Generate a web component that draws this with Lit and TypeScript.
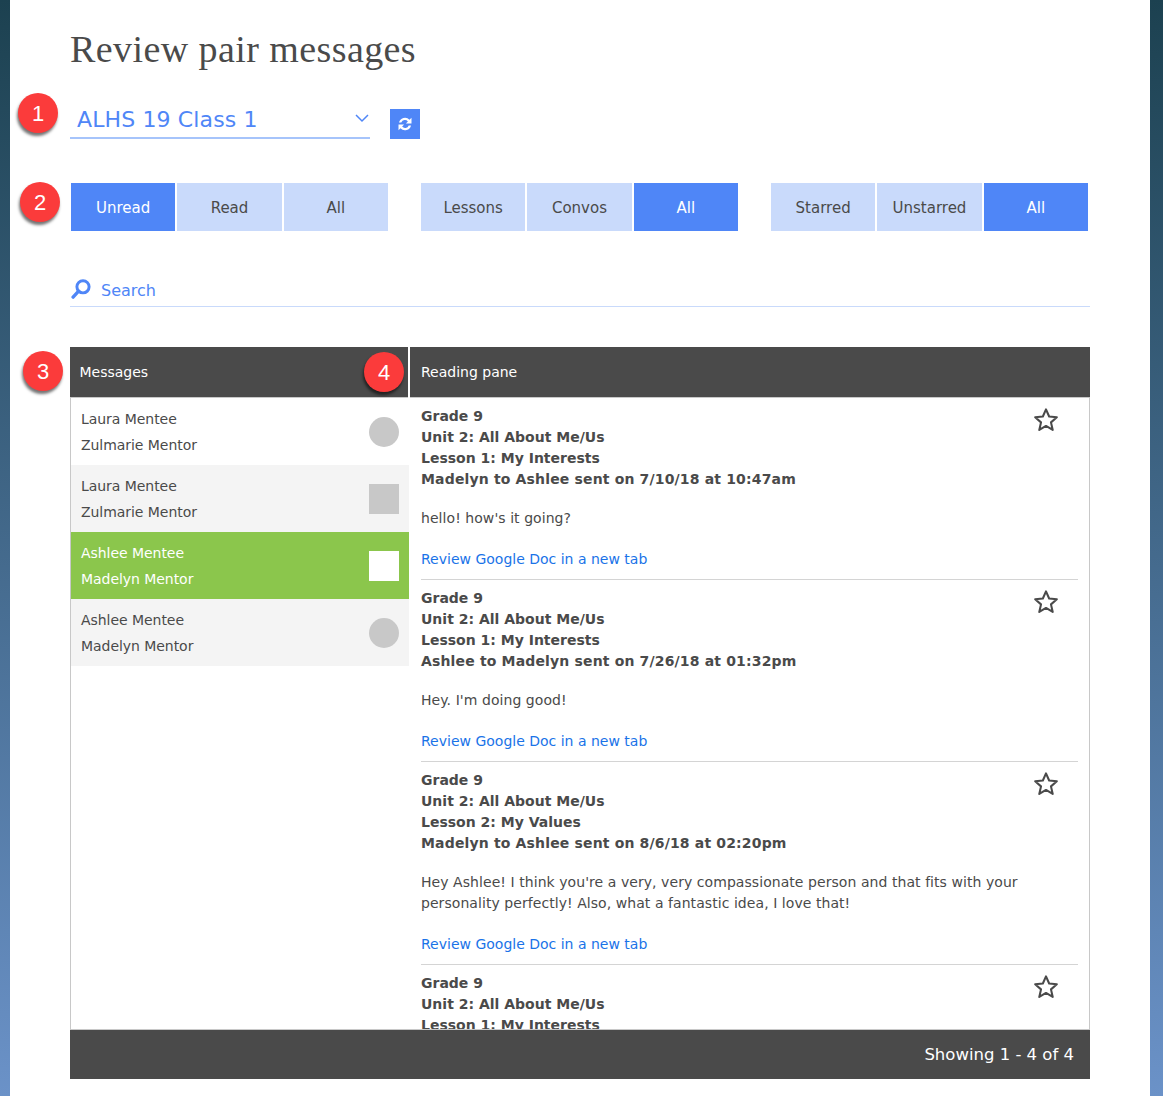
import { LitElement, html, css, svg, nothing } from "lit";
import { customElement } from "lit/decorators.js";

type Shape = "circle" | "square";
type Item = { lesson: string; sent?: string; body?: string[] };
const rows: { a: string; b: string; shape: Shape; cls: string }[] = [
  { a: "Laura Mentee", b: "Zulmarie Mentor", shape: "circle", cls: "" },
  { a: "Laura Mentee", b: "Zulmarie Mentor", shape: "square", cls: "alt" },
  { a: "Ashlee Mentee", b: "Madelyn Mentor", shape: "square", cls: "active" },
  { a: "Ashlee Mentee", b: "Madelyn Mentor", shape: "circle", cls: "alt" },
];
const items: Item[] = [
  { lesson: "Lesson 1: My Interests", sent: "Madelyn to Ashlee sent on 7/10/18 at 10:47am", body: ["hello! how's it going?"] },
  { lesson: "Lesson 1: My Interests", sent: "Ashlee to Madelyn sent on 7/26/18 at 01:32pm", body: ["Hey. I'm doing good!"] },
  { lesson: "Lesson 2: My Values", sent: "Madelyn to Ashlee sent on 8/6/18 at 02:20pm", body: ["Hey Ashlee! I think you're a very, very compassionate person and that fits with your", "personality perfectly! Also, what a fantastic idea, I love that!"] },
  { lesson: "Lesson 1: My Interests" },
];
const groups = [
  [["Unread", true], ["Read", false], ["All", false]],
  [["Lessons", false], ["Convos", false], ["All", true]],
  [["Starred", false], ["Unstarred", false], ["All", true]],
] as [string, boolean][][];
const star = svg`<path d="M12 2.2l2.9 6.6 7.1.7-5.4 4.7 1.6 7-6.2-3.7-6.2 3.7 1.6-7L2 9.5l7.1-.7z" fill="none" stroke="#4a4a4a" stroke-width="1.9" stroke-linejoin="round"/>`;

@customElement("app-root")
export class AppRoot extends LitElement {
  static styles = css`
    :host { display: block; height: 1096px; overflow: hidden; position: relative;
      background: linear-gradient(#1c4150, #6b92c8); font-family: "DejaVu Sans", Verdana, sans-serif; color: #4a4a4a; }
    .page { position: relative; margin: 0 13px 0 10px; height: 1096px; background: #fff; padding-left: 60px; box-sizing: border-box; display: flex; flex-direction: column; align-items: flex-start; }
    h1 { margin: 26px 0 0; height: 46px; font: 400 38px/46px "Liberation Serif", Georgia, serif; letter-spacing: .42px; color: #4a4a4a; white-space: nowrap; }
    .selrow { display: flex; align-items: flex-end; gap: 20px; margin-top: 32px; height: 35px; }
    .select { width: 300px; height: 33px; box-sizing: border-box; border-bottom: 2px solid #a6c4fb; display: flex; align-items: center; justify-content: space-between; padding: 0 0 4px 7px; color: #4f86f7; font-size: 22px; letter-spacing: .13px; }
    .select svg { margin-right: 1px; margin-top: -3px; }
    .refresh { width: 30px; height: 30px; background: #4f86f7; display: flex; align-items: center; justify-content: center; }
    .filters { display: flex; gap: 33px; margin: 44px 0 0 1px; }
    .group { display: flex; gap: 2px; }
    .btn { width: 104.33px; height: 48px; padding-top: 2px; box-sizing: border-box; background: #c9dafb; color: #4a4a4a; font-size: 15px; display: flex; align-items: center; justify-content: center; }
    .btn.on { background: #4f86f7; color: #fff; }
    .search { width: 1020px; height: 39px; margin-top: 37px; padding-top: 6px; box-sizing: border-box; border-bottom: 1px solid #c9dafb; display: flex; align-items: center; gap: 10px; color: #4f86f7; font-size: 16px; }
    .search svg { margin-left: 1px; margin-top: -2px; }
    .table { width: 1020px; margin-top: 40px; display: flex; flex-direction: column; height: 732px; }
    .heads { display: flex; gap: 2px; height: 51px; flex: none; }
    .head { background: #4a4a4a; color: #fff; font-size: 14px; display: flex; align-items: center; border-bottom: 1px solid #c8c8c8; box-sizing: border-box; }
    .h1 { width: 338px; padding-left: 9.5px; box-sizing: border-box; }
    .h2 { flex: 1; padding-left: 11px; }
    .cols { flex: 1; min-height: 0; display: flex; }
    .list { width: 339px; box-sizing: border-box; border-left: 1px solid #c8c8c8; flex: none; }
    .row { height: 67px; display: flex; align-items: center; justify-content: space-between; padding: 0 10px; font-size: 14px; line-height: 26px; letter-spacing: -.05px; box-sizing: border-box; }
    .row.alt { background: #f4f4f4; }
    .row.active { background: #8bc64c; color: #fff; }
    .mark { width: 30px; height: 30px; background: #c8c8c8; }
    .mark.circle { border-radius: 50%; }
    .active .mark { background: #fff; }
    .pane { flex: 1; min-width: 0; border-right: 1px solid #c8c8c8; overflow: hidden; padding: 0 11px 0 12px; }
    .item { position: relative; padding: 8px 0 9px; border-bottom: 1px solid #d4d4d4; font-size: 14px; line-height: 21px; }
    .meta { font-weight: 700; }
    .sent { letter-spacing: .16px; }
    .body { margin-top: 18px; letter-spacing: .06px; }
    .link { margin-top: 20px; color: #1a73e8; }
    .star { position: absolute; right: 19px; top: 9px; }
    .foot { flex: none; height: 50px; background: #4a4a4a; color: #fff; font-size: 16.5px; display: flex; align-items: center; justify-content: flex-end; padding-right: 16px; border-top: 1px solid #c8c8c8; box-sizing: border-box; }
    .badge { position: absolute; width: 40px; height: 40px; border-radius: 50%; background: #fb3b3b; color: #fff; box-shadow: -1px 3px 3px rgba(0,0,0,.55); font: 400 22px/41px "Liberation Sans", Arial, sans-serif; text-align: center; }
  `;

  render() {
    return html`
      <div class="page">
        <h1>Review pair messages</h1>
        <div class="selrow">
          <div class="select">ALHS 19 Class 1
            <svg width="14" height="9" viewBox="0 0 14 9"><path d="M1 1l6 6 6-6" fill="none" stroke="#4f86f7" stroke-width="1.5"/></svg>
          </div>
          <div class="refresh">
            <svg width="16" height="16" viewBox="0 0 16 16"><path d="M2 6.6A6.1 6.1 0 0 1 12.5 3.8l2-2v5.6H8.9l2-2A3.9 3.9 0 0 0 4.3 6.6zM14 9.4A6.1 6.1 0 0 1 3.5 12.2l-2 2V8.6h5.6l-2 2a3.9 3.9 0 0 0 6.6-1.2z" fill="#fff"/></svg>
          </div>
        </div>
        <div class="filters">
          ${groups.map((g) => html`<div class="group">${g.map(([t, on]) => html`<div class="btn ${on ? "on" : ""}">${t}</div>`)}</div>`)}
        </div>
        <div class="search">
          <svg width="20" height="20" viewBox="0 0 19 19"><circle cx="11.4" cy="7.4" r="5.8" fill="none" stroke="#4f86f7" stroke-width="2.8"/><path d="M7.2 11.6L2 17.2" stroke="#4f86f7" stroke-width="3.2" stroke-linecap="round"/></svg>
          Search
        </div>
        <div class="table">
          <div class="heads"><div class="head h1">Messages</div><div class="head h2">Reading pane</div></div>
          <div class="cols">
            <div class="list">
              ${rows.map((r) => html`<div class="row ${r.cls}"><div><div>${r.a}</div><div>${r.b}</div></div><div class="mark ${r.shape}"></div></div>`)}
            </div>
            <div class="pane">
              ${items.map((it) => html`<div class="item">
                <div class="meta"><div>Grade 9</div><div>Unit 2: All About Me/Us</div><div>${it.lesson}</div>${it.sent ? html`<div class="sent">${it.sent}</div>` : nothing}</div>
                ${it.body ? html`<div class="body">${it.body.map((l) => html`<div>${l}</div>`)}</div>
                <div class="link">Review Google Doc in a new tab</div>` : nothing}
                <svg class="star" width="26" height="26" viewBox="0 0 24 24">${star}</svg>
              </div>`)}
            </div>
          </div>
          <div class="foot">Showing 1 - 4 of 4</div>
        </div>
        <div class="badge" style="left:8px;top:93px">1</div>
        <div class="badge" style="left:10px;top:182px">2</div>
        <div class="badge" style="left:13px;top:351px">3</div>
        <div class="badge" style="left:354px;top:352px">4</div>
      </div>
    `;
  }
}
